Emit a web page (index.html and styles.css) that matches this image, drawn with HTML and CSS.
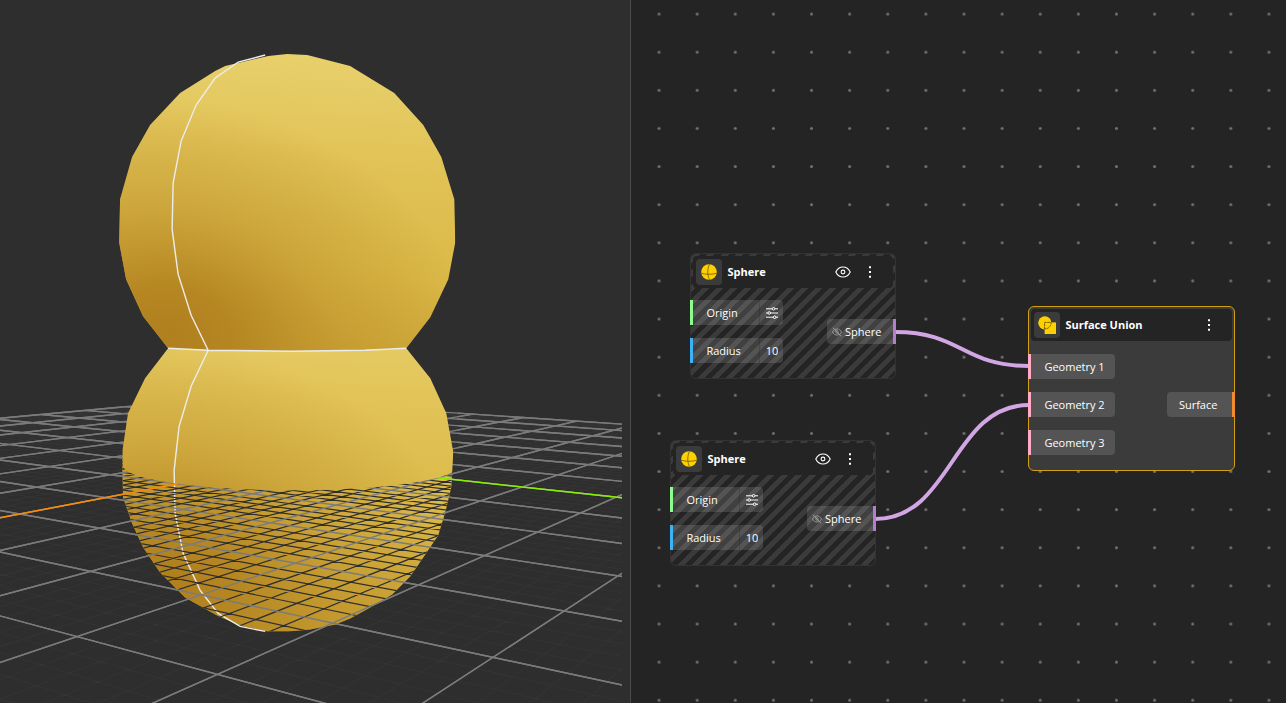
FILE: index.html
```html
<!DOCTYPE html>
<html lang="en">
<head>
<meta charset="utf-8">
<title>Surface Union</title>
<meta name="viewport" content="width=device-width, initial-scale=1">
<link rel="stylesheet" href="styles.css">
</head>
<body>
<svg class="sprite" aria-hidden="true">
  <symbol id="i-sphere" viewBox="0 0 16 16">
    <circle cx="8" cy="8" r="7.8" fill="#ffd000"/>
    <path d="M8.6 .3C6.2 4 6.2 12 8.6 15.7M.3 9.2C4 10.6 12 10.6 15.7 9.2" fill="none" stroke="#7d6500" stroke-width=".9"/>
  </symbol>
  <symbol id="i-union" viewBox="0 0 18 18">
    <circle cx="6.8" cy="6.8" r="6.6" fill="#ffd000"/>
    <path d="M6.6 6.4H18V18H6.6z" fill="#ffd000"/>
    <path d="M6.6 13V6.4H13.2C13.2 10 10.4 13 6.6 13z" fill="none" stroke="#5c4b00" stroke-width=".9" stroke-dasharray="2.4 .7"/>
  </symbol>
  <symbol id="i-eye" viewBox="0 0 16 12">
    <path d="M.8 6C2.3 2.8 4.9 1 8 1s5.700 1.800 7.200 5C13.700 9.200 11.100 11 8 11S2.300 9.200 .8 6z" fill="none" stroke="currentColor" stroke-width="1.1"/>
    <circle cx="8" cy="6" r="1.900" fill="none" stroke="currentColor" stroke-width="1.1"/>
  </symbol>
  <symbol id="i-eye-off" viewBox="0 0 10 10">
    <path d="M.5 5C1.500 3 3 2 5 2s3.500 1 4.500 3C8.500 7 7 8 5 8S1.500 7 .5 5z" fill="none" stroke="currentColor" stroke-width=".9"/>
    <circle cx="5" cy="5" r="1.300" fill="none" stroke="currentColor" stroke-width=".8"/>
    <path d="M1 .8L9 9.200" stroke="currentColor" stroke-width="1"/>
  </symbol>
  <symbol id="i-dots" viewBox="0 0 4 12">
    <path d="M1 .2h2v2H1zM1 5h2v2H1zM1 9.800h2v2H1z" fill="currentColor"/>
  </symbol>
  <symbol id="i-sliders" viewBox="0 0 12 12">
    <path d="M0 1.800h6.200M9 1.800h3M0 6h1.800M4.600 6H12M0 10.200h7.200M10 10.200h2" stroke="currentColor" fill="none"/>
    <g fill="none" stroke="currentColor"><circle cx="7.600" cy="1.800" r="1.300"/><circle cx="3.200" cy="6" r="1.300"/><circle cx="8.600" cy="10.200" r="1.300"/></g>
  </symbol>
</svg>

<main class="workspace">
  <section class="viewport" aria-label="3D view">
    <svg class="scene" viewBox="0 0 622 703" preserveAspectRatio="xMinYMin slice" role="img" aria-label="Two merged spheres on a grid">
      <defs>
        <linearGradient id="light" gradientUnits="userSpaceOnUse" x1="10" y1="-170" x2="-10" y2="170">
          <stop offset="0" stop-color="#e8d06c"/>
          <stop offset=".35" stop-color="#e0c154"/>
          <stop offset=".65" stop-color="#dbb947"/>
          <stop offset="1" stop-color="#c9a133"/>
        </linearGradient>
        <radialGradient id="shade" gradientUnits="userSpaceOnUse" cx="0" cy="0" r="1" gradientTransform="translate(-118 112) rotate(10) scale(310 235)">
          <stop offset="0" stop-color="#b07f1e"/>
          <stop offset=".2" stop-color="#b0801e" stop-opacity=".86"/>
          <stop offset=".55" stop-color="#b58622" stop-opacity=".4"/>
          <stop offset="1" stop-color="#b58622" stop-opacity="0"/>
        </radialGradient>
        <path id="upper" d="M287 54L307 55L350 66L358 71L394 93L423 125L441 157L454 199L455 242L448 279L430 317L406 348L290 351L208 350L168 348L143 316L126 279L119 242L120 199L132 157L150 125L180 93L215 71L225 66L268 56z"/>
        <path id="lower" d="M168 348L208 350L290 351L406 348L430 378L446 413L453 452L451 487L445 512L438 535L423 557L410 576L392 594L370 607L350 618L335 624L310 629L288 631L267 631L240 625L217 615L185 597L160 572L143 547L132 523L123 497L122 453L128 413L145 378z"/>
        <clipPath id="upper-clip"><use href="#upper"/></clipPath>
        <clipPath id="lower-clip"><use href="#lower"/></clipPath>
        <clipPath id="front-clip"><path id="front"/></clipPath>
      </defs>
      <path id="minor-back" class="grid-minor"/>
      <path id="major-back" class="grid-major"/>
      <g clip-path="url(#upper-clip)"><g transform="translate(287 222)"><path class="lit" d="M-170-170H170V170H-170z"/><path class="shaded" d="M-170-170H170V170H-170z"/></g></g>
      <g clip-path="url(#lower-clip)"><g transform="translate(287 465)"><path class="lit" d="M-170-170H170V170H-170z"/><path class="shaded" d="M-170-170H170V170H-170z"/></g></g>
      <path class="edge" d="M265 55L238 62L215 78L196 105L181 141L173 183L172 229L178 274L191 315L208 350L191 386L179 426L174 470L175 513L183 553L200 590L218 613L240 626L265 631M168 348L208 350L290 351L365 350L406 348"/>
      <g clip-path="url(#lower-clip)"><path id="minor-front" class="grid-cut" clip-path="url(#front-clip)"/></g>
      <path id="major-front" class="grid-major" clip-path="url(#front-clip)"/>
      <path id="axis-x" class="axis-x"/>
      <path id="axis-y" class="axis-y"/>
    </svg>
  </section>

  <section class="graph" aria-label="Node graph">
    <svg class="backdrop" aria-hidden="true">
      <defs>
        <pattern id="dots" width="38.12" height="38.12" patternUnits="userSpaceOnUse" patternTransform="translate(9 -5)">
          <circle cx="19.060" cy="19.060" r="1.500" fill="#727272"/>
        </pattern>
      </defs>
      <rect width="100%" height="100%" fill="url(#dots)"/>
      <path class="wire" d="M264 332C331 332 331 366 398 366"/>
      <path class="wire" d="M244 519C321 519 321 405 398 405"/>
    </svg>

    <article class="node node-muted sphere-a">
      <header class="node-head">
        <span class="tile"><svg class="glyph-sphere"><use href="#i-sphere"/></svg></span>
        <h2 class="node-title">Sphere</h2>
        <button class="icon-button" type="button" aria-label="Toggle visibility"><svg class="glyph-eye"><use href="#i-eye"/></svg></button>
        <button class="icon-button menu" type="button" aria-label="Node menu"><svg class="glyph-dots"><use href="#i-dots"/></svg></button>
      </header>
      <div class="node-body">
        <div class="ports">
          <div class="port port-point"><span class="port-label">Origin</span><button class="port-value" type="button" aria-label="Edit origin"><svg class="glyph-sliders"><use href="#i-sliders"/></svg></button></div>
          <div class="port port-number"><label class="port-label" for="radius-a">Radius</label><input class="port-value" id="radius-a" value="10"></div>
        </div>
        <div class="port port-out port-solid"><svg class="glyph-off"><use href="#i-eye-off"/></svg><span>Sphere</span></div>
      </div>
    </article>

    <article class="node node-muted sphere-b">
      <header class="node-head">
        <span class="tile"><svg class="glyph-sphere"><use href="#i-sphere"/></svg></span>
        <h2 class="node-title">Sphere</h2>
        <button class="icon-button" type="button" aria-label="Toggle visibility"><svg class="glyph-eye"><use href="#i-eye"/></svg></button>
        <button class="icon-button menu" type="button" aria-label="Node menu"><svg class="glyph-dots"><use href="#i-dots"/></svg></button>
      </header>
      <div class="node-body">
        <div class="ports">
          <div class="port port-point"><span class="port-label">Origin</span><button class="port-value" type="button" aria-label="Edit origin"><svg class="glyph-sliders"><use href="#i-sliders"/></svg></button></div>
          <div class="port port-number"><label class="port-label" for="radius-b">Radius</label><input class="port-value" id="radius-b" value="10"></div>
        </div>
        <div class="port port-out port-solid"><svg class="glyph-off"><use href="#i-eye-off"/></svg><span>Sphere</span></div>
      </div>
    </article>

    <article class="node node-active union">
      <header class="node-head">
        <span class="tile"><svg class="glyph-union"><use href="#i-union"/></svg></span>
        <h2 class="node-title">Surface Union</h2>
        <button class="icon-button menu" type="button" aria-label="Node menu"><svg class="glyph-dots"><use href="#i-dots"/></svg></button>
      </header>
      <div class="node-body">
        <div class="ports">
          <div class="port port-geometry"><span class="port-label">Geometry 1</span></div>
          <div class="port port-geometry"><span class="port-label">Geometry 2</span></div>
          <div class="port port-geometry"><span class="port-label">Geometry 3</span></div>
        </div>
        <div class="port port-out port-surface"><span>Surface</span></div>
      </div>
    </article>
  </section>
</main>
<script src="scene.js"></script>
</body>
</html>
```
FILE: styles.css
```css
* { box-sizing: border-box; }

body {
  margin: 0;
  background: #242424;
  color: #fff;
  font: 500 11px/16px "Open Sans", "Noto Sans", sans-serif;
}

button, input { font: inherit; color: inherit; border: 0; padding: 0; background: none; }

.sprite { position: absolute; width: 0; height: 0; }
.workspace { display: flex; height: 100vh; overflow: hidden; }

.viewport {
  flex: 0 0 49.1%;
  padding-right: 8px;
  background: #2e2e2e;
  border-right: 1px solid #4a4a4a;
  overflow: hidden;
}
.scene { display: block; width: 100%; height: 100%; }
.lit { fill: url(#light); }
.shaded { fill: url(#shade); }
.grid-minor { fill: none; stroke: #343434; }
.grid-major { fill: none; stroke: #7b7b7b; stroke-width: 1.4; }
.grid-cut { fill: none; stroke: #2e2e2e; stroke-width: 1.2; }
.edge { fill: none; stroke: #ececec; stroke-width: 1.4; }
.axis-x { stroke: #ff8c00; stroke-width: 1.5; }
.axis-y { stroke: #88f000; stroke-width: 1.5; }

.graph { position: relative; flex: 1; min-width: 0; overflow: hidden; }
.backdrop { display: block; width: 100%; height: 100%; }
.wire { fill: none; stroke: #d2a6e4; stroke-width: 4; }

.node {
  position: absolute;
  width: 206px;
  padding-top: 2px;
  border: 1px solid #333;
  border-radius: 6px;
}
.sphere-a { left: 59px; top: 253px; }
.sphere-b { left: 39px; top: 440px; }
.union { left: 397px; top: 306px; width: 207px; }
.node-muted { background: repeating-linear-gradient(-45deg, #242424 0 5px, #3b3b3b 5px 10px); }
.node-active { background: #3b3b3b; border-color: #d2a013; }

.node-head {
  display: flex;
  align-items: center;
  height: 32px;
  margin: 0 2px;
  padding: 0 18px 0 3px;
  border-radius: 4px;
  background: #242424;
}
.tile {
  display: grid;
  place-items: center;
  width: 26px;
  height: 26px;
  border-radius: 4px;
  background: #3b3b3b;
}
.node-title { flex: 1; margin: 0 0 0 5px; font-size: 11px; line-height: 16px; font-weight: 700; }
.icon-button { display: grid; place-items: center; height: 24px; width: 16px; }
.menu { width: 10px; margin-left: 14px; }

.node-body { display: flex; align-items: center; justify-content: space-between; padding: 12px 0 15px; margin: 0 -1px; }
.node-active .node-body { padding-top: 13px; }
.ports { display: grid; gap: 13px; justify-items: start; }
.port {
  display: flex;
  align-items: center;
  height: 25px;
  border-left: 3px solid;
  border-radius: 0 4px 4px 0;
  background: rgba(255, 255, 255, .13);
  background-clip: padding-box;
}
.port-label { padding: 0 10px 0 13px; }
.node-muted .port-label { width: 66px; }
.port-value {
  display: grid;
  place-items: center;
  width: 24px;
  height: 25px;
  border-left: 1px solid rgba(30, 30, 30, .25);
  border-radius: 0 4px 4px 0;
  text-align: center;
}
.port-point { border-color: #8dfb8d; }
.port-number { border-color: #3db2f7; }
.port-geometry { border-color: #ffabc5; }
.port-out {
  gap: 3px;
  padding: 0 12px;
  border-left: 0;
  border-right: 3px solid;
  border-radius: 4px 0 0 4px;
}
.port-solid { padding-left: 5px; border-color: #b67ccf; }
.port-surface { padding: 0 15px 0 12px; border-color: #f08c2e; }

.glyph-sphere { width: 16px; height: 16px; }
.glyph-union { width: 18px; height: 18px; }
.glyph-eye { width: 16px; height: 12px; }
.glyph-dots { width: 4px; height: 12px; }
.glyph-sliders { width: 12px; height: 12px; }
.glyph-off { width: 10px; height: 10px; color: #a0a0a0; }
```
FILE: scene.js
```js
// Ground plane projection; one unit is a major grid cell.
function project(a, c) {
  const w = 1 - 0.06925 * a - 0.0457 * c;
  return [(291.5 - 69.3 * a + 52.9 * c) / w, (461.6 - 22.55 * a - 13.9 * c) / w];
}

const FAR = -7;
const NEAR = 7;

function segment(a0, c0, a1, c1) {
  const [x0, y0] = project(a0, c0);
  const [x1, y1] = project(a1, c1);
  return `M${x0.toFixed(2)} ${y0.toFixed(2)}L${x1.toFixed(2)} ${y1.toFixed(2)}`;
}

function gridPath(major) {
  let d = "";
  for (let i = FAR * 5; i <= NEAR * 5; i++) {
    if ((i % 5 === 0) !== major) continue;
    const v = i / 5;
    d += segment(v, FAR, v, Math.min(NEAR, (0.93 - 0.06925 * v) / 0.0457));
    d += segment(FAR, v, Math.min(NEAR, (0.93 - 0.0457 * v) / 0.06925), v);
  }
  return d;
}

const set = (id, d) => document.getElementById(id).setAttribute("d", d);
const major = gridPath(true);
const minor = gridPath(false);
set("major-back", major);
set("major-front", major);
set("minor-back", minor);
set("minor-front", minor);
set("axis-x", segment(2, 0, 5, 0));
set("axis-y", segment(0, 2, 0, 6));

// Front half of the circle where the lower sphere meets the plane,
// walked from its rightmost point to its leftmost one.
const circle = [];
for (let t = 0; t < 360; t += 3) {
  const r = t * Math.PI / 180;
  circle.push(project(2 * Math.cos(r), 2 * Math.sin(r)));
}
const n = circle.length;
let right = 0;
let left = 0;
circle.forEach((p, i) => {
  if (p[0] > circle[right][0]) right = i;
  if (p[0] < circle[left][0]) left = i;
});
const below = circle[(right + 1) % n][1] > circle[right][1];
const step = below ? 1 : n - 1;
let d = `M622 380L${circle[right][0]} 380`;
for (let i = right; ; i = (i + step) % n) {
  d += `L${circle[i][0].toFixed(1)} ${circle[i][1].toFixed(1)}`;
  if (i === left) break;
}
d += `L${circle[left][0]} 380L0 380L0 703L622 703z`;
set("front", d);
```
